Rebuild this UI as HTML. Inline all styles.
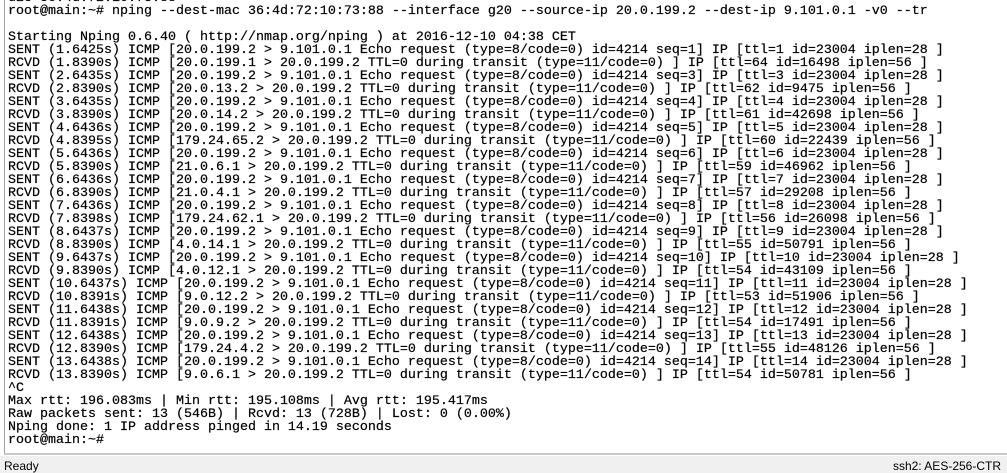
<!DOCTYPE html>
<html><head><meta charset="utf-8"><style>
html,body{margin:0;padding:0;width:1007px;height:473px;overflow:hidden;background:#fff;position:relative}
#term{position:absolute;left:0;top:0;width:1007px;height:454px;background:#fff;overflow:hidden}
#lb{position:absolute;left:4px;top:0;width:1px;height:455px;background:#a0a0a0}
#bb{position:absolute;left:4px;top:453px;width:1003px;height:2px;background:#c8c8c8}
pre{position:absolute;left:8px;top:-8px;margin:0;font-family:"Liberation Mono",monospace;font-size:13.33px;line-height:13px;color:#000;letter-spacing:0;-webkit-text-stroke:0.2px #000}
#status{position:absolute;left:0;top:456px;width:1007px;height:17px;background:#f0f0f0;font-family:"Liberation Sans",sans-serif;font-size:12px;color:#000}
#status .l{position:absolute;left:4px;top:3px}
#status .r{position:absolute;right:6px;top:3px}
</style></head><body>
<div id="term">
<pre>d2e 36:4d:72:10:73:88
root@main:~# nping --dest-mac 36:4d:72:10:73:88 --interface g20 --source-ip 20.0.199.2 --dest-ip 9.101.0.1 -v0 --tr

Starting Nping 0.6.40 ( http://nmap.org/nping ) at 2016-12-10 04:38 CET
SENT (1.6425s) ICMP [20.0.199.2 &gt; 9.101.0.1 Echo request (type=8/code=0) id=4214 seq=1] IP [ttl=1 id=23004 iplen=28 ]
RCVD (1.8390s) ICMP [20.0.199.1 &gt; 20.0.199.2 TTL=0 during transit (type=11/code=0) ] IP [ttl=64 id=16498 iplen=56 ]
SENT (2.6435s) ICMP [20.0.199.2 &gt; 9.101.0.1 Echo request (type=8/code=0) id=4214 seq=3] IP [ttl=3 id=23004 iplen=28 ]
RCVD (2.8390s) ICMP [20.0.13.2 &gt; 20.0.199.2 TTL=0 during transit (type=11/code=0) ] IP [ttl=62 id=9475 iplen=56 ]
SENT (3.6435s) ICMP [20.0.199.2 &gt; 9.101.0.1 Echo request (type=8/code=0) id=4214 seq=4] IP [ttl=4 id=23004 iplen=28 ]
RCVD (3.8390s) ICMP [20.0.14.2 &gt; 20.0.199.2 TTL=0 during transit (type=11/code=0) ] IP [ttl=61 id=42698 iplen=56 ]
SENT (4.6436s) ICMP [20.0.199.2 &gt; 9.101.0.1 Echo request (type=8/code=0) id=4214 seq=5] IP [ttl=5 id=23004 iplen=28 ]
RCVD (4.8395s) ICMP [179.24.65.2 &gt; 20.0.199.2 TTL=0 during transit (type=11/code=0) ] IP [ttl=60 id=22439 iplen=56 ]
SENT (5.6436s) ICMP [20.0.199.2 &gt; 9.101.0.1 Echo request (type=8/code=0) id=4214 seq=6] IP [ttl=6 id=23004 iplen=28 ]
RCVD (5.8390s) ICMP [21.0.6.1 &gt; 20.0.199.2 TTL=0 during transit (type=11/code=0) ] IP [ttl=59 id=46962 iplen=56 ]
SENT (6.6436s) ICMP [20.0.199.2 &gt; 9.101.0.1 Echo request (type=8/code=0) id=4214 seq=7] IP [ttl=7 id=23004 iplen=28 ]
RCVD (6.8390s) ICMP [21.0.4.1 &gt; 20.0.199.2 TTL=0 during transit (type=11/code=0) ] IP [ttl=57 id=29208 iplen=56 ]
SENT (7.6436s) ICMP [20.0.199.2 &gt; 9.101.0.1 Echo request (type=8/code=0) id=4214 seq=8] IP [ttl=8 id=23004 iplen=28 ]
RCVD (7.8398s) ICMP [179.24.62.1 &gt; 20.0.199.2 TTL=0 during transit (type=11/code=0) ] IP [ttl=56 id=26098 iplen=56 ]
SENT (8.6437s) ICMP [20.0.199.2 &gt; 9.101.0.1 Echo request (type=8/code=0) id=4214 seq=9] IP [ttl=9 id=23004 iplen=28 ]
RCVD (8.8390s) ICMP [4.0.14.1 &gt; 20.0.199.2 TTL=0 during transit (type=11/code=0) ] IP [ttl=55 id=50791 iplen=56 ]
SENT (9.6437s) ICMP [20.0.199.2 &gt; 9.101.0.1 Echo request (type=8/code=0) id=4214 seq=10] IP [ttl=10 id=23004 iplen=28 ]
RCVD (9.8390s) ICMP [4.0.12.1 &gt; 20.0.199.2 TTL=0 during transit (type=11/code=0) ] IP [ttl=54 id=43109 iplen=56 ]
SENT (10.6437s) ICMP [20.0.199.2 &gt; 9.101.0.1 Echo request (type=8/code=0) id=4214 seq=11] IP [ttl=11 id=23004 iplen=28 ]
RCVD (10.8391s) ICMP [9.0.12.2 &gt; 20.0.199.2 TTL=0 during transit (type=11/code=0) ] IP [ttl=53 id=51906 iplen=56 ]
SENT (11.6438s) ICMP [20.0.199.2 &gt; 9.101.0.1 Echo request (type=8/code=0) id=4214 seq=12] IP [ttl=12 id=23004 iplen=28 ]
RCVD (11.8391s) ICMP [9.0.9.2 &gt; 20.0.199.2 TTL=0 during transit (type=11/code=0) ] IP [ttl=54 id=17491 iplen=56 ]
SENT (12.6438s) ICMP [20.0.199.2 &gt; 9.101.0.1 Echo request (type=8/code=0) id=4214 seq=13] IP [ttl=13 id=23004 iplen=28 ]
RCVD (12.8390s) ICMP [179.24.4.2 &gt; 20.0.199.2 TTL=0 during transit (type=11/code=0) ] IP [ttl=55 id=48126 iplen=56 ]
SENT (13.6438s) ICMP [20.0.199.2 &gt; 9.101.0.1 Echo request (type=8/code=0) id=4214 seq=14] IP [ttl=14 id=23004 iplen=28 ]
RCVD (13.8390s) ICMP [9.0.6.1 &gt; 20.0.199.2 TTL=0 during transit (type=11/code=0) ] IP [ttl=54 id=50781 iplen=56 ]
^C
Max rtt: 196.083ms | Min rtt: 195.108ms | Avg rtt: 195.417ms
Raw packets sent: 13 (546B) | Rcvd: 13 (728B) | Lost: 0 (0.00%)
Nping done: 1 IP address pinged in 14.19 seconds
root@main:~#</pre>
<div id="lb"></div>
</div>
<div id="bb"></div>
<div id="status"><span class="l">Ready</span><span class="r">ssh2: AES-256-CTR</span></div>
</body></html>
